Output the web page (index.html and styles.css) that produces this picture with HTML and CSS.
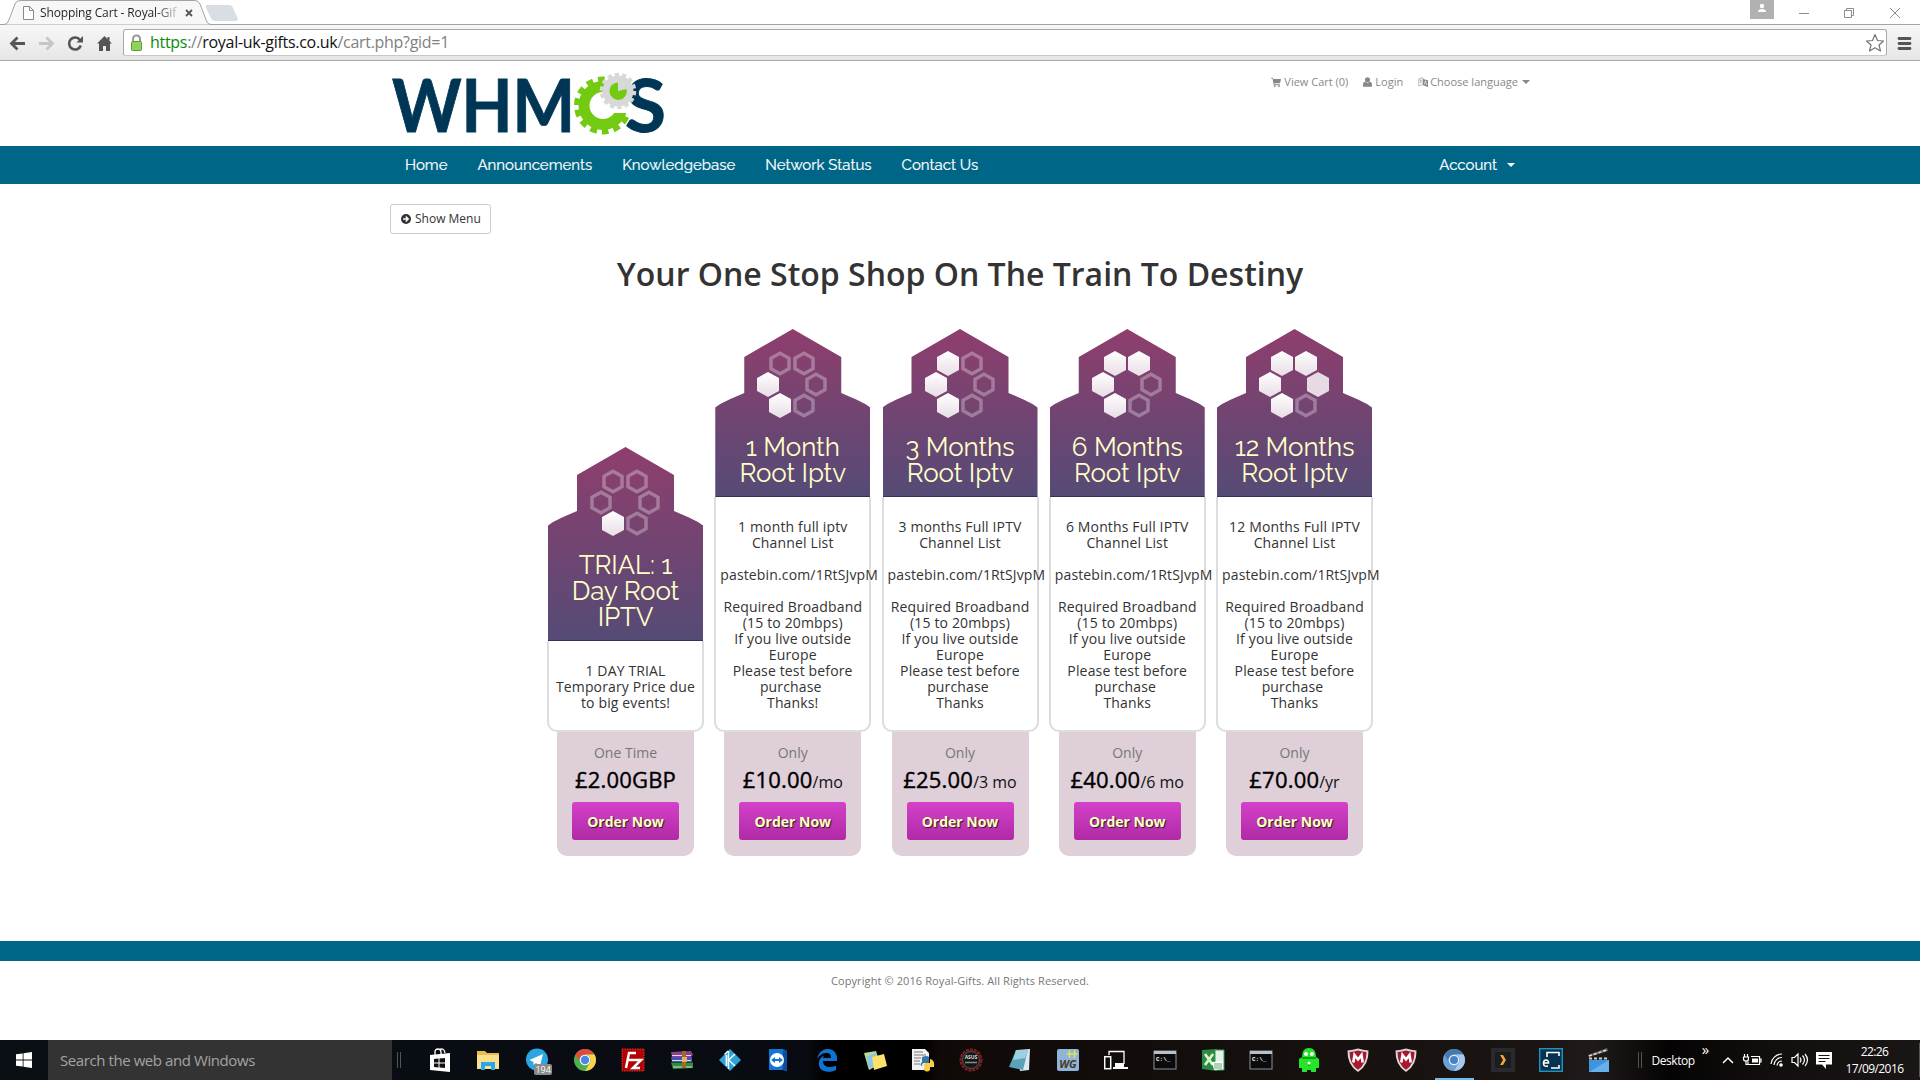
FILE: index.html
```html
<!DOCTYPE html>
<html lang="en">
<head>
<meta charset="utf-8">
<title>Shopping Cart - Royal-Gifts</title>
<link rel="stylesheet" href="styles.css">
</head>
<body>
<svg class="defs" width="0" height="0" aria-hidden="true">
  <defs>
    <linearGradient id="hexfill" x1="0" y1="0" x2="0" y2="1"><stop offset="0" stop-color="#fff"/><stop offset="1" stop-color="#e8dde6"/></linearGradient>
    <path id="hex" d="M0-12.5 11-6.5V6.5L0 12.5-11 6.5V-6.5Z"/>
    <path id="ring" d="M0-10.3 9-5.3V5.3L0 10.3-9 5.3V-5.3Z"/>
    <g id="cmd"><rect x="1" y="3" width="22" height="18" fill="#0a0a0a" stroke="#8b929c"/><path d="M1 4.500h22" stroke="#b9c0c9" stroke-width="3"/><text x="3" y="12.500" class="cmd-text">C:\_</text></g>
    <g id="mcafee"><path d="M1.500 2.500Q7 2 12 .5 17 2 22.500 2.500 23 17 12 24 1 17 1.500 2.500Z" fill="#d9d9dc"/><path d="M3.500 4Q8 3.800 12 2.500 16 3.800 20.500 4 20.500 16 12 21.800 3.500 16 3.500 4Z" fill="#a8182f"/><path d="M7.300 14.500 8.500 7l3.500 4.500L15.500 7l1.200 7.500" fill="none" stroke="#fff" stroke-width="2.600"/></g>
  </defs>
</svg>

<header class="browser">
  <div class="tabs">
    <svg class="tab-shape" width="240" height="25" viewBox="0 0 240 25">
      <path d="M0 24.500H4Q7 24.500 8.500 21L15 4Q16.500.5 20 .5H195Q198.500.5 200 4L206.500 21Q208 24.500 211 24.500H240" fill="#f7f7f7" stroke="#a3a3a3"/>
      <path d="M207 5h22q3 0 4 3l4.500 10q1 3-2 3H215q-3 0-4-3L206 8q-1-3 1-3Z" fill="#d9dde4"/>
      <path d="M23.500 6.500h6l4 4v9h-10Z M29.500 6.500v4h4" fill="#fff" stroke="#8a8a8a"/>
      <path d="M186 10l6 6m0-6-6 6" stroke="#555" stroke-width="1.800"/>
    </svg>
    <span class="tab-title">Shopping Cart - Royal-Gif</span>
    <svg class="window-buttons" width="170" height="24" viewBox="0 0 170 24">
      <rect width="24" height="19" fill="#b1b1b1"/><circle cx="12" cy="6" r="2.200" fill="#fff"/><path d="M8 12q0-3 4-3t4 3Z" fill="#fff"/>
      <path d="M49 13.500h10M94.500 10.500h7v7h-7ZM96.500 10v-1.500h7v7H102M140 8l10 10m0-10-10 10" fill="none" stroke="#8c8c8c"/>
    </svg>
  </div>
  <div class="toolbar">
    <svg width="123" height="36" viewBox="0 24 123 36">
      <path d="M25 42.500H12m5.500-6-6 6 6 6" fill="none" stroke="#555" stroke-width="2.800"/>
      <path d="M39 42.500h13m-5.500-6 6 6-6 6" fill="none" stroke="#c6c6c6" stroke-width="2.800"/>
      <path d="M80 39a6 6 0 1 0 .8 5.500" fill="none" stroke="#555" stroke-width="2.600"/><path d="M83 35v6.500h-6.500Z" fill="#555"/>
      <path d="M104.500 35 97 42.500h2v7.500h4v-5h3v5h4v-7.500h2l-2.500-2.600V36h-2v1.900Z" fill="#555"/>
    </svg>
    <div class="address">
      <svg width="26" height="24" viewBox="0 0 26 24"><path d="M9 10V8q0-3.500 3.500-3.500T16 8v2" fill="none" stroke="#9a9a9a" stroke-width="2"/><rect x="7.500" y="10.500" width="10" height="9" rx="1" fill="#8ed35c" stroke="#5b9b3b"/></svg>
      <span class="url"><span class="secure">https</span>://<b>royal-uk-gifts.co.uk</b>/cart.php?gid=1</span>
      <svg class="star" width="20" height="20" viewBox="0 0 20 20"><path d="M10 1.500 12.500 7.500 18.500 8 14 12l1.500 6L10 14.800 4.500 18 6 12 1.500 8l6-.5Z" fill="none" stroke="#757575" stroke-width="1.200" stroke-linejoin="round"/></svg>
    </div>
    <svg width="33" height="36" viewBox="1887 24 33 36"><path d="M1899 37.500h11m-11 5h11m-11 5h11" stroke="#555" stroke-width="2.800" stroke-linecap="round"/></svg>
  </div>
</header>

<section class="site-head container">
  <svg class="logo" width="290" height="70" viewBox="386 66 290 70">
    <text class="logo-text" x="392" y="131.700" textLength="183" lengthAdjust="spacingAndGlyphs">WHM</text>
    <text class="logo-text" x="625" y="131.700" textLength="41" lengthAdjust="spacingAndGlyphs">S</text>
    <clipPath id="c-open"><path d="M560 70h48v16l4 27h17v24h-69Z"/></clipPath>
    <circle cx="603" cy="105.500" r="23" fill="#fff"/>
    <g clip-path="url(#c-open)" fill="none" stroke="#72cb10"><circle cx="603" cy="105.500" r="19" stroke-width="11"/><circle cx="603" cy="105.500" r="26" stroke-width="6" stroke-dasharray="6.700 4.970"/></g>
    <g fill="none" stroke="#d8d8d8"><circle cx="618" cy="91" r="12" stroke-width="7"/><circle cx="618" cy="91" r="16.500" stroke-width="3.500" stroke-dasharray="4.200 3.205"/></g>
    <circle cx="618" cy="91" r="9" fill="#d8d8d8"/>
    <path d="M618 91V82.500A8.700 8.700 0 1 0 626.500 89Z" fill="#72cb10"/>
  </svg>
  <nav class="top-links">
    <a><svg width="10" height="10" viewBox="0 0 16 16"><path d="M0 1h3l1 2h12l-1.500 7H5.500l.3 1.500H14V13H4.500L2.400 2.500H0Z" fill="#888"/><circle cx="6" cy="14.500" r="1.500" fill="#888"/><circle cx="13" cy="14.500" r="1.500" fill="#888"/></svg><span>View Cart (0)</span></a>
    <a><svg width="9" height="10" viewBox="0 0 14 15"><circle cx="7" cy="4" r="4" fill="#888"/><path d="M0 15v-3q0-5 3.500-5Q7 10 10.500 7 14 7 14 12v3Z" fill="#888"/></svg><span>Login</span></a>
    <a><svg width="10" height="10" viewBox="0 0 16 16"><path d="M1 3l7-2v11l-7 2ZM2.500 5h4M4.500 4q1 4-2.500 6M3.500 6q1 3 3 4" fill="none" stroke="#999"/><path d="M8 3l8 2v11l-8-3Z" fill="#888"/><path d="M10 12l2-6 2 7" fill="none" stroke="#fff"/></svg><span>Choose language</span><i class="caret"></i></a>
  </nav>
</section>

<div class="navbar"><div class="container nav-row">
  <a>Home</a><a>Announcements</a><a>Knowledgebase</a><a>Network Status</a><a>Contact Us</a>
  <a class="account"><span>Account</span><i class="caret"></i></a>
</div></div>

<main class="container">
  <button class="show-menu"><svg width="10" height="10" viewBox="0 0 12 12"><circle cx="6" cy="6" r="6" fill="#333"/><path d="M2.500 6H8M5.700 3l3 3-3 3" fill="none" stroke="#fff" stroke-width="1.700"/></svg><span>Show Menu</span></button>
  <h1>Your One Stop Shop On The Train To Destiny</h1>
  <div class="plans">
    <article class="plan">
      <div class="plan-head">
        <svg width="155" height="92" viewBox="0 0 155 92"><g class="empty"><use href="#ring" x="65" y="34.500"/><use href="#ring" x="89" y="34.500"/><use href="#ring" x="53" y="55.500"/><use href="#ring" x="101" y="55.500"/><use href="#ring" x="89" y="76.500"/></g><g class="full"><use href="#hex" x="65" y="76.500"/></g></svg>
        <h2>TRIAL: 1<br>Day Root<br>IPTV</h2>
      </div>
      <div class="plan-body">1 DAY TRIAL<br>Temporary Price due<br>to big events!</div>
      <div class="plan-price"><small>One Time</small><p><b>£2.00GBP</b></p><button>Order Now</button></div>
    </article>
    <article class="plan">
      <div class="plan-head">
        <svg width="155" height="92" viewBox="0 0 155 92"><g class="empty"><use href="#ring" x="65" y="34.500"/><use href="#ring" x="89" y="34.500"/><use href="#ring" x="101" y="55.500"/><use href="#ring" x="89" y="76.500"/></g><g class="full"><use href="#hex" x="53" y="55.500"/><use href="#hex" x="65" y="76.500"/></g></svg>
        <h2>1 Month<br>Root Iptv</h2>
      </div>
      <div class="plan-body">1 month full iptv<br>Channel List<br><br><span>pastebin.com/1RtSJvpM</span><br><br>Required Broadband<br>(15 to 20mbps)<br>If you live outside<br>Europe<br>Please test before<br><span class="wide">purchase</span><br>Thanks!</div>
      <div class="plan-price"><small>Only</small><p><b>£10.00</b><span>/mo</span></p><button>Order Now</button></div>
    </article>
    <article class="plan">
      <div class="plan-head">
        <svg width="155" height="92" viewBox="0 0 155 92"><g class="empty"><use href="#ring" x="89" y="34.500"/><use href="#ring" x="101" y="55.500"/><use href="#ring" x="89" y="76.500"/></g><g class="full"><use href="#hex" x="65" y="34.500"/><use href="#hex" x="53" y="55.500"/><use href="#hex" x="65" y="76.500"/></g></svg>
        <h2>3 Months<br>Root Iptv</h2>
      </div>
      <div class="plan-body">3 months Full IPTV<br>Channel List<br><br><span>pastebin.com/1RtSJvpM</span><br><br>Required Broadband<br>(15 to 20mbps)<br>If you live outside<br>Europe<br>Please test before<br><span class="wide">purchase</span><br>Thanks</div>
      <div class="plan-price"><small>Only</small><p><b>£25.00</b><span>/3 mo</span></p><button>Order Now</button></div>
    </article>
    <article class="plan">
      <div class="plan-head">
        <svg width="155" height="92" viewBox="0 0 155 92"><g class="empty"><use href="#ring" x="101" y="55.500"/><use href="#ring" x="89" y="76.500"/></g><g class="full"><use href="#hex" x="65" y="34.500"/><use href="#hex" x="89" y="34.500"/><use href="#hex" x="53" y="55.500"/><use href="#hex" x="65" y="76.500"/></g></svg>
        <h2>6 Months<br>Root Iptv</h2>
      </div>
      <div class="plan-body">6 Months Full IPTV<br>Channel List<br><br><span>pastebin.com/1RtSJvpM</span><br><br>Required Broadband<br>(15 to 20mbps)<br>If you live outside<br>Europe<br>Please test before<br><span class="wide">purchase</span><br>Thanks</div>
      <div class="plan-price"><small>Only</small><p><b>£40.00</b><span>/6 mo</span></p><button>Order Now</button></div>
    </article>
    <article class="plan">
      <div class="plan-head">
        <svg width="155" height="92" viewBox="0 0 155 92"><g class="empty"><use href="#ring" x="89" y="76.500"/></g><g class="full"><use href="#hex" x="65" y="34.500"/><use href="#hex" x="89" y="34.500"/><use href="#hex" x="53" y="55.500"/><use href="#hex" x="65" y="76.500"/></g><use href="#hex" x="101" y="55.500" fill="#e6dbe4"/></svg>
        <h2>12 Months<br>Root Iptv</h2>
      </div>
      <div class="plan-body">12 Months Full IPTV<br>Channel List<br><br><span>pastebin.com/1RtSJvpM</span><br><br>Required Broadband<br>(15 to 20mbps)<br>If you live outside<br>Europe<br>Please test before<br><span class="wide">purchase</span><br>Thanks</div>
      <div class="plan-price"><small>Only</small><p><b>£70.00</b><span>/yr</span></p><button>Order Now</button></div>
    </article>
  </div>
</main>

<footer class="site-foot"><div class="foot-bar"></div><p>Copyright © 2016 Royal-Gifts. All Rights Reserved.</p></footer>

<div class="taskbar">
  <div class="start"><svg width="16" height="16" viewBox="0 0 16 16"><path d="M0 2.300 6.700 1.400V7.600H0ZM7.500 1.300 16 0V7.600H7.500ZM0 8.400H6.700V14.600L0 13.700ZM7.500 8.400H16V16L7.500 14.800Z" fill="#fff"/></svg></div>
  <div class="search">Search the web and Windows</div>
  <div class="grip"></div>
  <div class="apps">
    <div><svg viewBox="0 0 24 24"><path d="M2 7 22 5V24L2 22Z" fill="#fff"/><path d="M7 7V4q0-3 3-3t3 3v2M11 2q5-3 6 3" fill="none" stroke="#fff" stroke-width="1.300"/><path d="M6 11l4.500-.5v4H6Zm5.500-.6L17 10v4.500h-5.500ZM6 15.500h4.500v4L6 19Zm5.500 0H17V20l-5.500-.5Z" fill="#111"/></svg></div>
    <div><svg viewBox="0 0 24 24"><path d="M1 3h8l2 2h12v16H1Z" fill="#e8bd4c"/><path d="M1 7h22v14H1Z" fill="#fbe08b"/><path d="M5 22v-8h14v8h-4v-4H9v4Z" fill="#28a8e8"/></svg></div>
    <div class="badged"><svg viewBox="0 0 24 24"><circle cx="12" cy="11.500" r="11" fill="#2ca5e0"/><path d="M4.500 12 18 6l-3 12-4-3-2.500 2v-3Z" fill="#fff"/></svg><em>194</em></div>
    <div><svg viewBox="0 0 24 24"><circle cx="12" cy="12" r="11" fill="#4caf50"/><path d="M2.500 6.500A11 11 0 0 1 21.500 6.500H12A5.500 5.500 0 0 0 7.200 14.800Z" fill="#e24a3c"/><path d="M21.500 6.500A11 11 0 0 1 12 23L16.800 14.700A5.500 5.500 0 0 0 12 6.500Z" fill="#fdd14a"/><circle cx="12" cy="12" r="5.300" fill="#fff"/><circle cx="12" cy="12" r="4.200" fill="#4a86e8"/></svg></div>
    <div><svg viewBox="0 0 24 24"><path d="M1 1h22v22H1Z" fill="#b40000" stroke="#d33" stroke-dasharray="1.500 1"/><path d="M5 20 8 5h7M7 12h6M13 12h7l-8 8h7" fill="none" stroke="#fff" stroke-width="2.500"/></svg></div>
    <div><svg viewBox="0 0 24 24"><path d="M1 4l20-1 2 4-2 2H2Z" fill="#8e3f8f"/><path d="M1 9h21v5H2Z" fill="#4652b8"/><path d="M1 14.500h22V20l-20 1Z" fill="#2e8d3d"/><path d="M2 7.500h19M2 12.500h19M3 19h19" stroke="#ddd"/><path d="M12 3h4v17h-4Z" fill="#a06a2a"/><rect x="12" y="9" width="5" height="5" fill="#e2b45b"/></svg></div>
    <div><svg viewBox="0 0 24 24"><path d="M12 1 23 12 12 23 1 12Z" fill="#2ea3d6"/><path d="M8.500 7v11" stroke="#fff" stroke-width="1.800"/><path d="M6.500 6.500 10 3M17 6l-6.300 6 6.300 6M10.500 3v18" fill="none" stroke="#fff" stroke-width="1.300"/></svg></div>
    <div><svg viewBox="0 0 24 24"><path d="M3 1h14l4 2v20l-4-1H3Z" fill="#1476d4"/><path d="M17 1l4 2v20l-4-1Z" fill="#0a4f9c"/><circle cx="11" cy="12" r="7" fill="#fff"/><path d="M5 12l4-3v2h4V9l4 3-4 3v-2H9v2Z" fill="#1476d4"/></svg></div>
    <div><svg viewBox="0 0 24 24"><path d="M2 11C4 2 10 1 13 1c6 0 9 5 9 9v3H8c0 4 3 6 7 6 3 0 5-.8 6-1.500V22c-2 1-4 1.800-7.500 1.800C7 23.800 3 20 4 14c.5-4 4-6 6-7-1.500 1-2 2.500-2 3h8c0-3-1-5-5-5-4 0-7 3-9 6Z" fill="#0f74d1"/></svg></div>
    <div><svg viewBox="0 0 24 24"><path d="M1 5 13 3l4 13-11 6Z" fill="#b8db8d"/><path d="M4 8l9-3v14l-8 1Z" fill="#8ec4e6"/><path d="M9 9l12-3 3 12-13 4Z" fill="#fbe36a"/></svg></div>
    <div><svg viewBox="0 0 24 24"><path d="M1 1h13l4 4v17H1Z" fill="#f2f2f2"/><path d="M3 4h9M3 7h12M3 10h7M3 13h6M3 16h6" stroke="#777"/><path d="M11 14V9q5-2 7 0v6h-5q-2 0-2 3-3-1 0-4" fill="#3a76a8"/><path d="M13 22v-5q0-2 2-2h4v-4q5 1 4 8h-4v3q-3 3-6 0Z" fill="#f8cf45"/></svg></div>
    <div><svg viewBox="0 0 24 24"><circle cx="12" cy="12" r="10.500" fill="#161616" stroke="#8c1c22" stroke-width="2" stroke-dasharray="3 1"/><circle cx="12" cy="12" r="8.500" fill="none" stroke="#777" stroke-width=".7"/><text x="12" y="11" class="asus-text">ASUS</text><path d="M6 14.500h12" stroke="#888" stroke-width="1.500"/></svg></div>
    <div><svg viewBox="0 0 24 24"><path d="M9 2l13-1-1 21-9 1Z" fill="#dceaf0"/><path d="M8 2l12 0-5 20L1 19Z" fill="#5ba2b8"/><path d="M8 2h12l-2.500 8L5 12Z" fill="#9dd0de"/></svg></div>
    <div><svg viewBox="0 0 24 24"><rect x="1" y="1" width="22" height="22" rx="2" fill="#8fb4dc"/><path d="M13.500 2v8m-3-4h6m2-4v8m-3-4h6" stroke="#e8e04a" stroke-width="1.500"/><text x="12" y="20" class="wg-text">WG</text></svg></div>
    <div><svg viewBox="0 0 24 24"><path d="M5 7V3.500h15V16" fill="none" stroke="#fff" stroke-width="1.300"/><rect x=".7" y="8.700" width="6" height="12" fill="none" stroke="#fff" stroke-width="1.500"/><path d="M11 15h9v4h4v2H9v-2h2Z" fill="#fff"/></svg></div>
    <div><svg viewBox="0 0 24 24"><use href="#cmd"/></svg></div>
    <div><svg viewBox="0 0 24 24"><path d="M1 2 16 1v22L1 21Z" fill="#2b8a44"/><path d="M14 2h9v20h-9Z" fill="#e5f3e6" stroke="#3c9a53"/><path d="M4 6l8 11M12 6 4 17" stroke="#d8f3c8" stroke-width="2.800"/><path d="M11 14l11-1v8l-9 1Z" fill="#fff"/><path d="M13 16h8m-8 2h8m-8 2h8" stroke="#5aa86a"/></svg></div>
    <div><svg viewBox="0 0 24 24"><use href="#cmd"/></svg></div>
    <div><svg viewBox="0 0 24 24"><path d="M5 9Q5 0 12 0t7 9l3 2v9h-3v4h-5v-2h-4v2H5v-4H2v-9Z" fill="#25e52b"/><circle cx="9" cy="6" r="2" fill="#fff"/><circle cx="15" cy="6" r="2" fill="#fff"/><path d="M5 10h14M12 14v4" stroke="#0d8c13" stroke-width="1.300"/><circle cx="12" cy="15" r="1.500" fill="#fff"/></svg></div>
    <div><svg viewBox="0 0 24 24"><use href="#mcafee"/></svg></div>
    <div><svg viewBox="0 0 24 24"><use href="#mcafee"/></svg></div>
    <div class="active"><svg viewBox="0 0 24 24"><circle cx="12" cy="12" r="11" fill="#6c9fd8"/><path d="M2.500 6.500A11 11 0 0 1 21.500 6.500H12A5.500 5.500 0 0 0 7.200 14.800Z" fill="#4778ae"/><path d="M21.500 6.500A11 11 0 0 1 12 23L16.800 14.700A5.500 5.500 0 0 0 12 6.500Z" fill="#a5c8ef"/><circle cx="12" cy="12" r="5.300" fill="#e7f0fa"/><circle cx="12" cy="12" r="4" fill="#4a80c4"/></svg></div>
    <div><svg viewBox="0 0 24 24"><rect width="24" height="24" fill="#282a2d"/><rect x="4" y="4" width="16" height="16" fill="#1b1c1e"/><path d="M9 7h3l3 5-3 5H9l3-5Z" fill="#f2a33a"/></svg></div>
    <div><svg viewBox="0 0 24 24"><rect x=".7" y=".7" width="22.600" height="22.600" fill="#06324f" stroke="#1895c4" stroke-width="1.400"/><path d="M8 9V4.500h12V8M12 20h8v-3M4.500 15h5q0-3-2.500-3t-2.500 3.500Q4.500 19 9 18" fill="none" stroke="#fff" stroke-width="1.600"/></svg></div>
    <div><svg viewBox="0 0 24 24"><rect x="2" y="9" width="20" height="15" fill="#3f94de"/><path d="M2 9h20v3H2Z" fill="#222"/><path d="M2 10.500h20" stroke="#ccc" stroke-width="2" stroke-dasharray="3 2"/><path d="M1 7 20 0l1 3L2 9Z" fill="#666"/><path d="M2 8 20 2" stroke="#ddd" stroke-width="1.500" stroke-dasharray="3 2"/><path d="M2 24 22 12v12Z" fill="#67b0ee"/></svg></div>
  </div>
  <div class="grip end"></div>
  <span class="desktop">Desktop</span><span class="more">»</span>
  <svg class="tray" width="116" height="40" viewBox="1720 1040 116 40" fill="none" stroke="#fff" stroke-width="1.200">
    <path d="M1723 1063l5-5 5 5" stroke-width="1.500"/>
    <path d="M1751 1056.500h8.500v8H1748v-3M1759.500 1059h1.500v3h-1.500M1744.500 1054v3m3-3v3M1743.500 1057h5v2q0 2-2.500 2t-2.500-2ZM1746 1061v3.500h2"/><path d="M1752 1058.500h6v4h-6Z" fill="#fff" stroke="none"/>
    <path d="M1771 1064a11 11 0 0 1 11-10M1774 1065a8 8 0 0 1 8-7.500M1777 1065.500a5 5 0 0 1 5-4.500"/><circle cx="1781" cy="1065" r="1.200" fill="#fff"/>
    <path d="M1792 1057.500h2.500l3.500-3.500v12l-3.500-3.500h-2.500ZM1800 1057.500q2 2.500 0 5M1802.500 1055.500q4 4.500 0 9M1805 1054q5 6 0 12"/>
    <path d="M1816 1052h16v12.500h-6V1069l-4-4.500h-6Z" fill="#fff" stroke="none"/><path d="M1818.500 1055.500h11m-11 3h11m-11 3h7" stroke="#161616"/>
  </svg>
  <div class="clock"><span>22:26</span><span>17/09/2016</span></div>
</div>
</body>
</html>
```
FILE: styles.css
```css
* { box-sizing: border-box; }
body { margin: 0; width: 1920px; height: 1080px; overflow: hidden; display: flex; flex-direction: column; background: #fff; color: #333; font-family: "Open Sans", sans-serif; }
svg { display: block; flex: none; }
.defs { position: absolute; }
a, span { white-space: nowrap; }

/* Browser window */
.browser { height: 61px; flex: none; border-bottom: 1px solid #a8a8a8; }
.tabs { height: 25px; display: flex; justify-content: space-between; border-bottom: 1px solid #a3a3a3; }
.tab-shape { margin-right: -240px; }
.tab-title { flex: 1; padding-left: 40px; font: 12px/25px "Open Sans", sans-serif; letter-spacing: -.13px; z-index: 1; background: linear-gradient(90deg, #222 155px, #ccc 178px); background-clip: text; -webkit-background-clip: text; color: transparent; }
.toolbar { height: 35px; display: flex; background: linear-gradient(#f7f7f7, #e6e6e6); }
.address { flex: 1; height: 27px; margin-top: 4px; display: flex; align-items: center; border: 1px solid #a9a9a9; border-bottom-color: #c8c8c8; border-radius: 3px; background: #fff; }
.url { flex: 1; padding-bottom: 1px; font: 16px/23px "Open Sans", sans-serif; letter-spacing: -.29px; color: #808080; }
.url b { font-weight: 400; color: #111; }
.secure { color: #0b8a0b; }
.star { margin-right: 1px; }

/* Site header */
.container { width: 1140px; margin: 0 auto; }
.site-head { height: 85px; flex: none; display: flex; justify-content: space-between; padding-top: 5px; }
.logo { margin-left: -4px; overflow: visible; }
.logo-text { font: 700 73px Lato, sans-serif; fill: #003655; stroke: #003655; stroke-width: .9px; }
.top-links { display: flex; gap: 15px; padding-top: 8px; font-size: 11px; line-height: 16px; color: #888; }
.top-links a { display: flex; align-items: center; gap: 3px; height: 16px; }
.top-links a:last-child { gap: 2px; }
.caret { border: 4px solid transparent; border-top-color: currentColor; border-bottom: 0; margin-left: 2px; }
.navbar { height: 38px; flex: none; background: #006687; color: #fff; }
.nav-row { display: flex; gap: 30px; padding: 0 15px; font: 15px/38px Raleway, Lato, sans-serif; -webkit-text-stroke: .2px; }
.account { margin-left: auto; display: flex; align-items: center; gap: 8px; }

/* Order form */
main { height: 757px; flex: none; padding-top: 20px; }
.show-menu { display: flex; align-items: center; gap: 4px; width: 101px; height: 30px; padding: 0 10px 1px; border: 1px solid #ccc; border-radius: 3px; background: #fff; font: 12px "Open Sans", sans-serif; color: #333; }
h1 { margin: 18px 0 0; text-align: center; font: 600 32px/44px "Open Sans", sans-serif; color: #333; }
.plans { display: flex; justify-content: center; align-items: flex-end; gap: 12.25px; height: 560px; }
.plan { width: 155px; }
.plan-head { position: relative; z-index: 1; padding-bottom: 10px; border-bottom: 1px solid #3b2d57; background: linear-gradient(#8f3e6d, #554b76); clip-path: polygon(77.5px 0, 126px 28px, 126px 64px, 141px 70.500px, 150px 75px, 155px 78.500px, 100% 100%, 0 100%, 0 78.500px, 5px 75px, 14px 70.500px, 29px 64px, 29px 28px); }
.plan-head h2 { margin: 13px 0 0; text-align: center; color: #ffffc8; font: 26px/26px Raleway, Lato, sans-serif; letter-spacing: -.12px; }
.empty { fill: none; stroke: #fff; stroke-opacity: .3; stroke-width: 3.500; }
.full { fill: url(#hexfill); }
.plan-body { position: relative; z-index: 1; padding: 22px 4px 19px; margin: 0 -1px; border: 2px solid #ddd; border-top: 0; border-radius: 0 0 10px 10px; background: #fff; text-align: center; font-size: 14px; line-height: 16px; letter-spacing: .15px; }
.wide { padding-right: 4px; }
.plan-price { width: 137px; height: 125px; margin: -1px 0 0 9px; padding-top: 13px; border-radius: 0 0 10px 10px; background: #decfd9; text-align: center; display: flex; flex-direction: column; align-items: center; }
.plan-price small { font-size: 14px; line-height: 18px; color: #777; }
.plan-price p { margin: 4px 0 9px; height: 27px; line-height: 27px; font-size: 16px; color: #111; white-space: nowrap; }
.plan-price b { font-size: 22px; font-weight: 500; letter-spacing: .2px; color: #000; -webkit-text-stroke: .4px #000; }
.plan-price button { width: 107px; height: 38px; border: 0; border-radius: 3px; padding: 0; background: linear-gradient(#d441ca, #b02aa6); color: #ffffc8; font: 700 14px "Open Sans", sans-serif; text-shadow: 1px 1px 1px #222; }

/* Footer */
.site-foot { flex: 1; text-align: center; font-size: 11px; letter-spacing: .1px; color: #777; }
.foot-bar { height: 20px; background: #006687; }
.site-foot p { margin: 12px 0 0; line-height: 16px; }

/* Taskbar */
.taskbar { height: 40px; flex: none; display: flex; align-items: center; background: linear-gradient(90deg, #0a0f15 0, #080c12 42%, #000 43%, #000 48%, #0f0a08 49%, #1a1413 80%, #201a1a 83%, #050303 87%, #130e0e 92%, #1b1616 100%); color: #fff; }
.start { width: 48px; display: flex; justify-content: center; }
.search { width: 344px; height: 40px; padding-left: 12px; background: #333; color: #a3a3a3; font: 15px/40px "Open Sans", sans-serif; letter-spacing: -.42px; }
.grip { width: 4px; height: 16px; margin: 0 15px 0 5px; border: solid #555; border-width: 0 1px; }
.grip.end { margin: 0 10px 0 14px; }
.apps { width: 1207.5px; flex: none; display: flex; }
.apps > div { flex: 1; height: 40px; display: flex; align-items: center; justify-content: center; }
.apps svg { width: 24px; height: 24px; }
.badged { position: relative; }
.badged em { position: absolute; right: 9px; bottom: 5px; padding: 0 1px; border-radius: 2px; background: #8a8a8a; font: 9px/11px "Open Sans", sans-serif; }
.apps > .active { border-bottom: 2px solid #76b9ed; margin: 0 5px; flex: 0 0 38.3px; padding-top: 2px; }
.cmd-text { font: 700 6px "Liberation Mono", monospace; fill: #fff; }
.asus-text { font: 700 5px "Open Sans", sans-serif; fill: #ddd; text-anchor: middle; }
.wg-text { font: italic 700 11px "Open Sans", sans-serif; fill: #4a3a20; text-anchor: middle; }
.desktop { font-size: 12px; letter-spacing: -.45px; }
.more { font-size: 15px; margin: -22px 0 0 7px; }
.tray { margin-left: auto; }
.clock { width: 84px; display: flex; flex-direction: column; align-items: center; font-size: 12px; line-height: 17px; letter-spacing: -.57px; border-right: 1px solid #555; padding-right: 6px; }
```
